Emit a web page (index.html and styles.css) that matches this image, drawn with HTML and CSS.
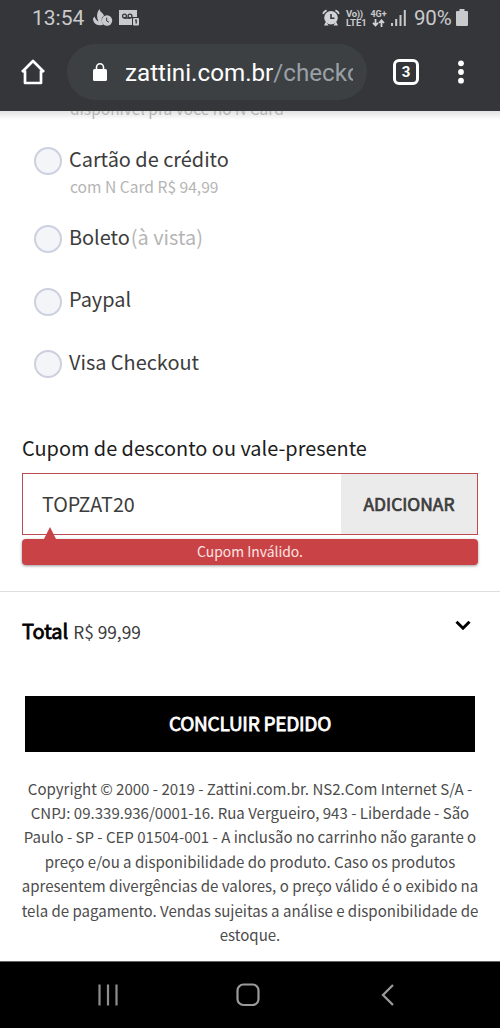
FILE: index.html
```html
<!DOCTYPE html>
<html lang="pt-BR">
<head>
<meta charset="utf-8">
<title>Zattini - Checkout</title>
<link rel="stylesheet" href="styles.css">
</head>
<body>
<div class="phone">
  <header class="top">
    <div class="status">
      <span class="clock">13:54</span>
      <svg class="st-fire" width="20" height="18" viewBox="0 0 20 18"><path fill="#c9cacc" d="M6.500 0C6.800 3 10.500 4 11 7C8.500 8 8 11 9.500 14C10 15 10.500 16 9 16C3 17 0 13.500 0 9.500L1.500 7.500C2.500 10 3.500 11.500 5.500 12.500C3.500 8 3.500 4 6.500 0Z"/><circle cx="14" cy="11.500" r="5.200" fill="#c9cacc"/><path d="M13.700 8.700V12L16 13.200" fill="none" stroke="#35363a" stroke-width="1"/></svg>
      <svg class="st-mail" width="20" height="16" viewBox="0 0 20 16"><path fill="#c9cacc" d="M0 0H18V7H13V15H0Z"/><rect x="14" y="8" width="6" height="7.500" rx="1" fill="#c9cacc"/><g fill="none" stroke="#35363a" stroke-width="1.300"><circle cx="5.500" cy="6" r="1.900"/><circle cx="11" cy="6" r="1.900"/><path d="M5 8H11.500M16 10.200H17.200V13.500"/></g></svg>
      <svg class="st-alarm" width="18" height="18" viewBox="0 0 18 18"><g fill="none" stroke="#d2d3d5" stroke-width="1.700"><path d="M1 4.800Q2 2.500 4.600 1.400M17 4.800Q16 2.500 13.400 1.400"/></g><circle cx="9" cy="8.800" r="6.800" fill="#d2d3d5"/><path d="M4 12.500L2 16.500H6.500ZM14 12.500L16 16.500H11.500Z" fill="#d2d3d5"/><path d="M9 5V9.300H12.500" fill="none" stroke="#35363a" stroke-width="1.600"/></svg>
      <span class="volte"><span class="vo">Vo))</span><span>LTE1</span></span>
      <span class="net"><span>4G+</span><svg width="13" height="8" viewBox="0 0 13 8"><path d="M3.500 0V6M1 3.800L3.500 6.500L6 3.800M9.500 8V1.500M7 4L9.500 1.300L12 4" fill="none" stroke="#d2d3d5" stroke-width="1.800"/></svg></span>
      <svg class="st-signal" width="16" height="16" viewBox="0 0 16 16"><path d="M1 13V16M5.200 9V16M9.500 5V16M13.800 0V16" stroke="#c9cacc" stroke-width="2"/></svg>
      <span class="pct">90%</span>
      <svg class="st-batt" width="12" height="17" viewBox="0 0 12 17"><path fill="#c9cacc" d="M3.500 0H8.500V2H11Q12 2 12 3V16Q12 17 11 17H1Q0 17 0 16V3Q0 2 1 2H3.500Z"/></svg>
    </div>
    <div class="browser">
      <svg class="home" width="26" height="26" viewBox="0 0 26 26"><path d="M2 13L13 2L24 13M5 11.500V24H21V11.500" fill="none" stroke="#fff" stroke-width="2.700" stroke-linejoin="round"/></svg>
      <div class="pill">
        <svg width="14" height="18" viewBox="0 0 14 18"><rect y="6" width="14" height="12" rx="1.600" fill="#fff"/><path d="M3.500 7.500V4.300A3.500 3.500 0 0 1 10.500 4.300V7.500" fill="none" stroke="#fff" stroke-width="1.600"/></svg>
        <div class="url">zattini.com.br<span>/checkout</span></div>
      </div>
      <div class="tabs">3</div>
      <svg class="dots" width="6" height="24" viewBox="0 0 6 24"><g fill="#fff"><circle cx="3" cy="3.300" r="2.900"/><circle cx="3" cy="12" r="2.900"/><circle cx="3" cy="20.700" r="2.900"/></g></svg>
    </div>
  </header>
  <main class="page">
    <div class="shade"></div>
    <p class="cut">disponível pra você no N Card</p>
    <div class="option credit"><i class="radio"></i><span class="label">Cartão de crédito</span></div>
    <p class="sub">com N Card R$ 94,99</p>
    <div class="option boleto"><i class="radio"></i><span class="label">Boleto</span><span class="label muted">(à vista)</span></div>
    <div class="option"><i class="radio"></i><span class="label">Paypal</span></div>
    <div class="option"><i class="radio"></i><span class="label">Visa Checkout</span></div>
    <h2 class="coupon-title">Cupom de desconto ou vale-presente</h2>
    <div class="coupon"><div class="code">TOPZAT20</div><div class="add">ADICIONAR</div></div>
    <div class="error">Cupom Inválido.</div>
    <div class="total"><strong>Total</strong><span class="price">R$ 99,99</span><svg width="16" height="11" viewBox="0 0 16 11"><path d="M1.500 1.800L8 8.200L14.500 1.800" fill="none" stroke="#000" stroke-width="3"/></svg></div>
    <div class="finish">CONCLUIR PEDIDO</div>
    <p class="legal">Copyright © 2000 - 2019 - Zattini.com.br. NS2.Com Internet S/A -<br>CNPJ: 09.339.936/0001-16. Rua Vergueiro, 943 - Liberdade - São<br>Paulo - SP - CEP 01504-001 - A inclusão no carrinho não garante o<br>preço e/ou a disponibilidade do produto. Caso os produtos<br>apresentem divergências de valores, o preço válido é o exibido na<br>tela de pagamento. Vendas sujeitas a análise e disponibilidade de<br>estoque.</p>
  </main>
  <nav class="nav">
    <svg width="22" height="22" viewBox="0 0 22 22"><path d="M2.500 0.500V21.500M11 0.500V21.500M19.500 0.500V21.500" stroke="#8e8e8e" stroke-width="2.200"/></svg>
    <svg width="24" height="24" viewBox="0 0 24 24"><rect x="1.500" y="1.500" width="21" height="20.500" rx="6" fill="none" stroke="#9a9a9a" stroke-width="2.200"/></svg>
    <svg width="14" height="22" viewBox="0 0 14 22"><path d="M12 1L2 11L12 21" fill="none" stroke="#9a9a9a" stroke-width="2.300"/></svg>
  </nav>
</div>
</body>
</html>
```
FILE: styles.css
```css
* { box-sizing: border-box; }
body { margin: 0; background: #fff; font-family: "Noto Sans CJK SC", "Noto Sans", sans-serif; color: #3c3c3c; }
p, h2 { margin: 0; font-weight: 400; }
svg { display: block; flex: none; }
.phone { width: 500px; height: 1028px; display: flex; flex-direction: column; overflow: hidden; }
.top { height: 111px; flex: none; background: #35363a; font-family: Roboto, sans-serif; }
.status { height: 36px; display: flex; align-items: flex-start; padding: 0 0 0 32px; color: #c9cacc; }
.clock { width: 61px; font-size: 21px; line-height: 36px; }
.st-fire { margin-top: 9px; }
.st-mail { margin: 10px 0 0 6px; }
.st-alarm { margin: 9px 0 0 183px; }
.volte { width: 21px; margin: 9px 0 0 6px; display: flex; flex-direction: column; font-size: 9.5px; line-height: 9px; font-weight: 700; white-space: nowrap; }
.vo { letter-spacing: -0.3px; }
.net { width: 17px; margin: 9px 0 0 3px; display: flex; flex-direction: column; align-items: center; font-size: 9px; line-height: 10px; font-weight: 700; }
.st-signal { margin: 10px 0 0 4px; }
.pct { width: 40px; margin-left: 7px; font-size: 20.5px; line-height: 36px; letter-spacing: -0.2px; }
.st-batt { margin: 9px 0 0 2px; }
.browser { height: 72px; display: flex; align-items: center; padding-left: 20px; }
.home { margin-bottom: 1px; }
.pill { width: 300px; height: 56px; margin-left: 21px; padding-left: 26px; border-radius: 28px; background: #3c4043; display: flex; align-items: center; }
.url { width: 228px; margin-left: 18px; padding-top: 2px; overflow: hidden; white-space: nowrap; font-size: 24.2px; line-height: 36px; color: #fff; }
.url span { color: #9aa0a6; }
.tabs { width: 26px; height: 26px; margin-left: 26px; border: 3px solid #fff; border-radius: 6px; color: #fff; font-size: 15px; font-weight: 700; line-height: 20px; text-align: center; }
.dots { margin-left: 39px; }
.page { flex: 1; overflow: hidden; padding: 0 22px; }
.shade { height: 9px; margin: 0 -22px -9px; background: linear-gradient(#e2e2e2, #fff); }
.cut { height: 25px; margin-top: -24px; padding-left: 48px; font-size: 15.5px; line-height: 24px; color: #b5b5b5; position: relative; }
.option { height: 62.5px; display: flex; align-items: center; padding-left: 12px; }
.radio { width: 28px; height: 28px; border: 2px solid #ccd0df; border-radius: 50%; background: #f3f5f8; }
.label { font-size: 19.9px; line-height: 30px; margin: -5px 0 0 7px; }
.option .muted { color: #b5b5b5; margin-left: 1px; }
.credit { height: 28px; margin-top: 26px; }
.sub { height: 24px; margin-top: -1px; padding-left: 48px; font-size: 15.6px; line-height: 24px; color: #b5b5b5; }
.boleto { margin-top: 10px; }
.coupon-title { height: 34px; margin-top: 35px; font-size: 19.9px; line-height: 34px; color: #1c1c1c; }
.coupon { height: 62px; margin-top: 8px; border: 1px solid #bd4c50; display: flex; }
.code { flex: 1; padding-left: 19px; font-size: 19.7px; line-height: 60px; }
.add { width: 136px; background: #ebebeb; text-align: center; font-size: 17.4px; -webkit-text-stroke: 0.7px #3c3c3c; line-height: 60px; }
.error { position: relative; height: 26px; margin-top: 4px; border-radius: 4px; background: #c94346; box-shadow: 0 1px 3px rgba(0,0,0,.4); color: #ffe4e2; font-size: 13.9px; line-height: 24px; text-align: center; }
.error::before { content: ""; position: absolute; left: 22px; top: -12px; border: 6px solid transparent; border-top: 0; border-bottom: 12px solid #c94346; }
.total { height: 105px; margin: 26px -22px 0; padding: 24px 29px 0 22px; border-top: 1px solid #dedede; display: flex; align-items: flex-start; }
.total strong { font-size: 20px; font-weight: 400; -webkit-text-stroke: 0.8px #000; line-height: 30px; color: #000; }
.price { margin-left: 5px; font-size: 17.3px; line-height: 32px; }
.total svg { margin: 4px 0 0 auto; }
.finish { height: 56px; margin: 0 3px; background: #000; color: #fff; font-size: 19px; letter-spacing: -0.25px; -webkit-text-stroke: 0.8px #fff; line-height: 54px; text-align: center; }
.legal { margin: 25px -20px 0; font-size: 15.04px; line-height: 24.4px; text-align: center; white-space: nowrap; color: #4c4c4c; }
.nav { height: 67px; flex: none; background: #000; border-top: 1px solid #666; display: flex; align-items: center; padding-left: 97px; }
.nav svg:nth-child(2) { margin-left: 117px; }
.nav svg:nth-child(3) { margin-left: 121px; }
```
